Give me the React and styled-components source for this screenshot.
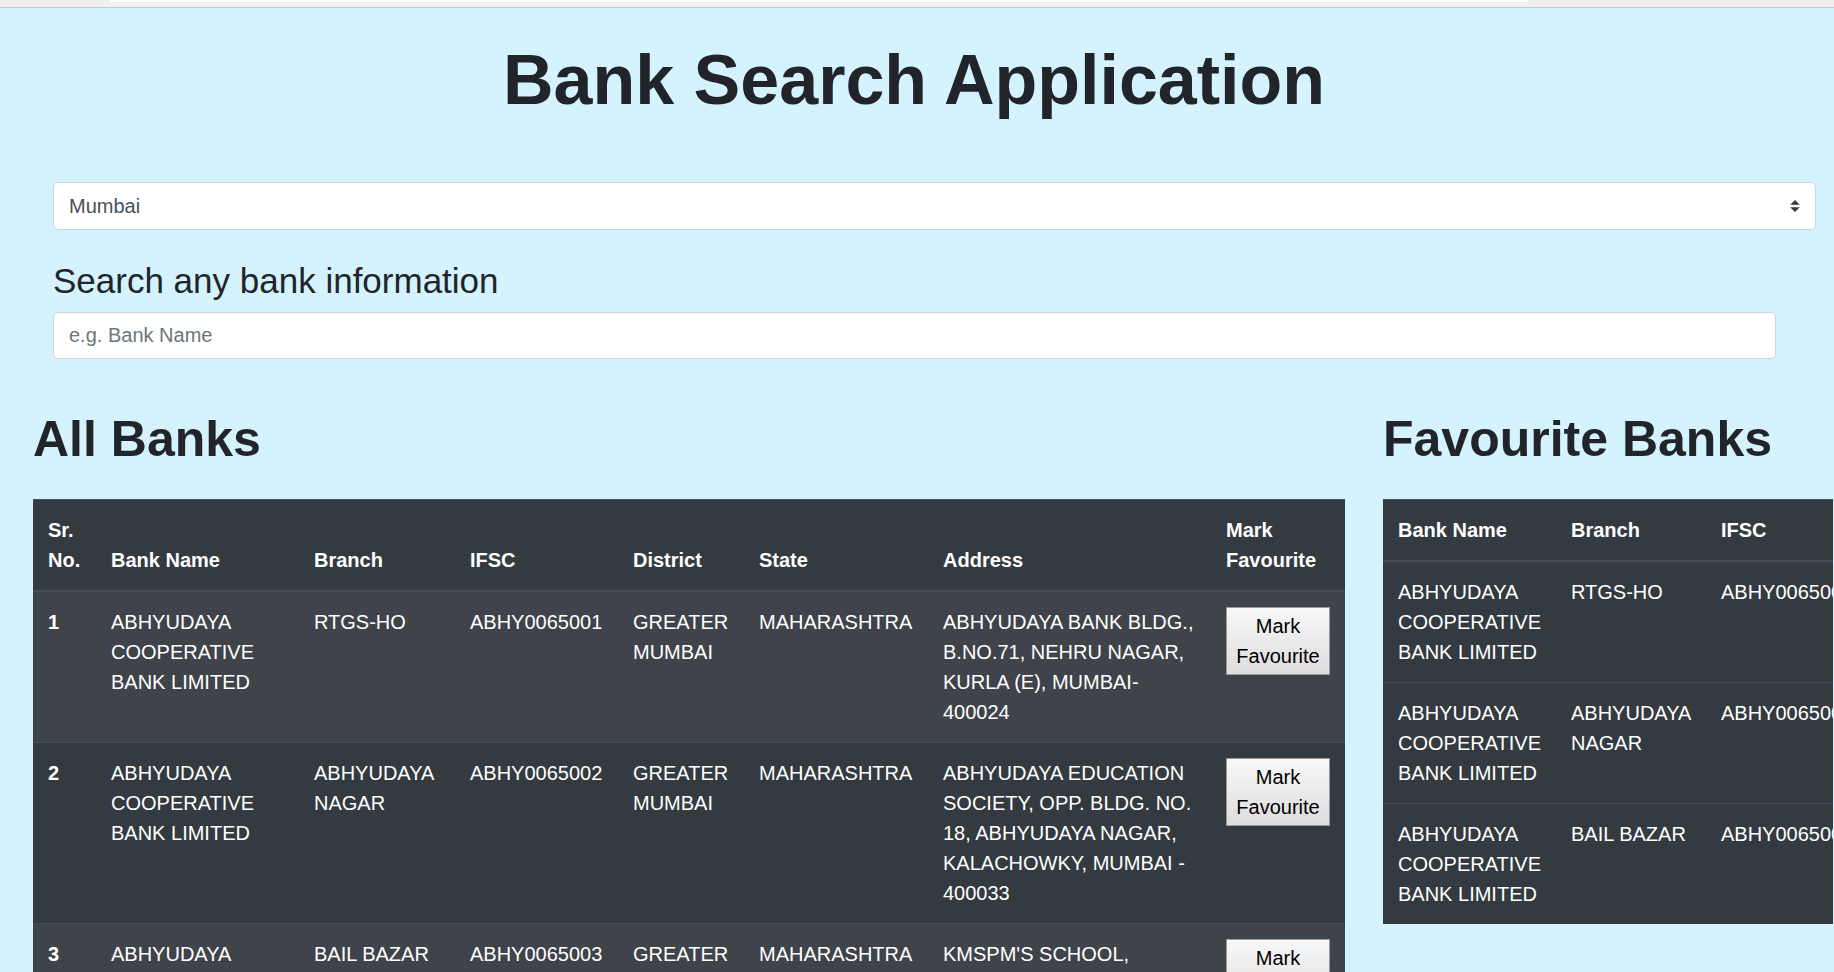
import React, { useState } from "react";
import styled, { createGlobalStyle } from "styled-components";

const GlobalStyle = createGlobalStyle`
  *, *::before, *::after { box-sizing: border-box; }
  body {
    margin: 0;
    background: #d4f3ff;
    color: #212529;
    font-family: "Liberation Sans", Arial, sans-serif;
    font-size: 20px;
    line-height: 30px;
    overflow-x: hidden;
  }
`;

const Viewport = styled.div`
  height: 100vh;
  overflow: hidden;
`;

const BrowserEdge = styled.div`
  height: 8px;
  padding: 0 306px 0 110px;
  background: #f2f0ef;
  border-bottom: 1px solid #cbc8c6;
`;

const AddressBar = styled.div`
  height: 2px;
  background: #ffffff;
  border-radius: 0 0 4px 4px;
`;

const Title = styled.h1`
  margin: 0;
  padding: 30px 6px 60px 0;
  font-size: 70px;
  line-height: 84px;
  text-align: center;
`;

const Filters = styled.form`
  display: flex;
  flex-direction: column;
  padding: 0 18px 0 53px;
`;

const SelectWrap = styled.div`
  display: grid;
  align-items: center;
  margin-bottom: 30px;

  & > * { grid-area: 1 / 1; }
`;

const CitySelect = styled.select`
  appearance: none;
  width: 100%;
  height: 48px;
  padding: 0 35px 0 15px;
  border: 1px solid #ced4da;
  border-radius: 5px;
  background: #ffffff;
  color: #495057;
  font: inherit;
`;

const Arrows = styled.svg`
  justify-self: end;
  width: 10px;
  height: 12px;
  margin-right: 16px;
  pointer-events: none;
`;

const SearchLabel = styled.label`
  margin-bottom: 10px;
  font-size: 35px;
  line-height: 42px;
`;

const SearchInput = styled.input`
  height: 47px;
  margin-right: 40px;
  padding: 0 15px;
  border: 1px solid #ced4da;
  border-radius: 5px;
  background: #ffffff;
  color: #495057;
  font: inherit;

  &::placeholder { color: #6c757d; opacity: 1; }
`;

const Columns = styled.main`
  display: grid;
  grid-template-columns: minmax(0, 1fr) 450px;
  gap: 38px;
  padding: 50px 1px 0 33px;
`;

const Panel = styled.section`
  min-width: 0;
  overflow: hidden;
`;

const PanelTitle = styled.h2`
  margin: 0 0 30px;
  font-size: 50px;
  line-height: 60px;
  white-space: nowrap;
`;

const BankTable = styled.table`
  width: ${(p) => p.$width};
  table-layout: fixed;
  border-collapse: collapse;
  background: #333a40;
  color: #ffffff;
`;

const BodyRow = styled.tr`
  background: ${(p) => (p.$striped ? "#3f434a" : "transparent")};
`;

const HeadCell = styled.th`
  padding: 15px;
  border-top: 1px solid #444e56;
  border-bottom: 2px solid #444e56;
  text-align: left;
  vertical-align: bottom;
`;

const RowHead = styled.th`
  padding: 15px;
  border-top: 1px solid #444e56;
  text-align: left;
  vertical-align: top;
`;

const Cell = styled.td`
  padding: 15px;
  border-top: 1px solid #444e56;
  vertical-align: top;
`;

const MarkButton = styled.button`
  display: block;
  width: 100%;
  padding: 3px 8px;
  border: 1px solid #999999;
  border-radius: 0;
  background: linear-gradient(#f8f8f8, #dddddd);
  color: #000000;
  font: inherit;
  text-align: center;
`;

const BANK = "ABHYUDAYA COOPERATIVE BANK LIMITED";

const banks = [
  { branch: "RTGS-HO", ifsc: "ABHY0065001", address: "ABHYUDAYA BANK BLDG., B.NO.71, NEHRU NAGAR, KURLA (E), MUMBAI-400024" },
  { branch: "ABHYUDAYA NAGAR", ifsc: "ABHY0065002", address: "ABHYUDAYA EDUCATION SOCIETY, OPP. BLDG. NO. 18, ABHYUDAYA NAGAR, KALACHOWKY, MUMBAI - 400033" },
  { branch: "BAIL BAZAR", ifsc: "ABHY0065003", address: "KMSPM'S SCHOOL," },
];

const allColumns = [
  ["Sr. No.", "63px"],
  ["Bank Name", "203px"],
  ["Branch", "156px"],
  ["IFSC", "163px"],
  ["District", "126px"],
  ["State", "184px"],
  ["Address", "auto"],
  ["Mark Favourite", "134px"],
];

const favouriteColumns = [
  ["Bank Name", "173px"],
  ["Branch", "150px"],
  ["IFSC", "163px"],
];

const Col = styled.col`
  width: ${(p) => p.$width};
`;

function TableHead({ columns }) {
  return (
    <>
      <colgroup>
        {columns.map(([name, width]) => <Col key={name} $width={width} />)}
      </colgroup>
      <thead>
        <tr>
          {columns.map(([name]) => <HeadCell key={name} scope="col">{name}</HeadCell>)}
        </tr>
      </thead>
    </>
  );
}

export default function App() {
  const [query, setQuery] = useState("");
  return (
    <Viewport>
      <GlobalStyle />
      <BrowserEdge><AddressBar /></BrowserEdge>
      <Title>Bank Search Application</Title>
      <Filters onSubmit={(e) => e.preventDefault()}>
        <SelectWrap>
          <CitySelect aria-label="City" defaultValue="Mumbai">
            <option>Mumbai</option>
          </CitySelect>
          <Arrows viewBox="0 0 4 5" aria-hidden="true">
            <path fill="#343a40" d="M2 0L0 2h4zm0 5L0 3h4z" />
          </Arrows>
        </SelectWrap>
        <SearchLabel htmlFor="bank-search">Search any bank information</SearchLabel>
        <SearchInput
          id="bank-search"
          type="text"
          placeholder="e.g. Bank Name"
          value={query}
          onChange={(e) => setQuery(e.target.value)}
        />
      </Filters>
      <Columns>
        <Panel>
          <PanelTitle>All Banks</PanelTitle>
          <BankTable $width="100%">
            <TableHead columns={allColumns} />
            <tbody>
              {banks.map((bank, i) => (
                <BodyRow key={bank.ifsc} $striped={i % 2 === 0}>
                  <RowHead scope="row">{i + 1}</RowHead>
                  <Cell>{BANK}</Cell>
                  <Cell>{bank.branch}</Cell>
                  <Cell>{bank.ifsc}</Cell>
                  <Cell>GREATER MUMBAI</Cell>
                  <Cell>MAHARASHTRA</Cell>
                  <Cell>{bank.address}</Cell>
                  <Cell><MarkButton type="button">Mark Favourite</MarkButton></Cell>
                </BodyRow>
              ))}
            </tbody>
          </BankTable>
        </Panel>
        <Panel>
          <PanelTitle>Favourite Banks</PanelTitle>
          <BankTable $width="486px">
            <TableHead columns={favouriteColumns} />
            <tbody>
              {banks.map((bank) => (
                <BodyRow key={bank.ifsc}>
                  <Cell>{BANK}</Cell>
                  <Cell>{bank.branch}</Cell>
                  <Cell>{bank.ifsc}</Cell>
                </BodyRow>
              ))}
            </tbody>
          </BankTable>
        </Panel>
      </Columns>
    </Viewport>
  );
}
